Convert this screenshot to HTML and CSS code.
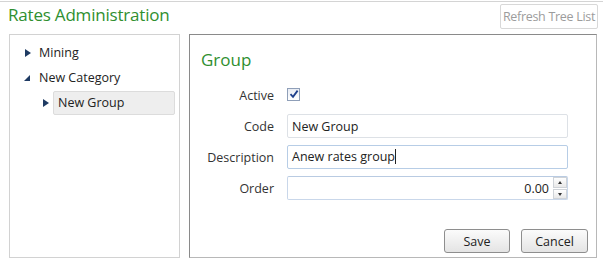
FILE: index.html
```html
<!DOCTYPE html>
<html lang="en">
<head>
    <meta charset="UTF-8">
    <title>Rates Administration</title>
    <link rel="stylesheet" href="styles.css">
</head>
<body>
    <div class="header">
        <h2>Rates Administration</h2>
        <button class="refreshButton" disabled>Refresh Tree List</button>
    </div>

    <div class="admin-container">
        <div class="tree">
            <div class="node">
                <span class="arrow collapsed"></span>
                <span class="label">Mining</span>
            </div>
            <div class="node">
                <span class="arrow expanded"></span>
                <span class="label">New Category</span>
            </div>
            <div class="node child">
                <span class="arrow collapsed"></span>
                <span class="label selected">New Group</span>
            </div>
        </div>

        <div class="editor">
            <h3>Group</h3>
            <form class="group-form">
                <label for="active">Active</label>
                <div class="check-cell">
                    <span class="checkbox" id="active">
                        <svg width="10" height="10" viewBox="0 0 10 10"><path d="M1.5 5.2 L4 7.8 L8.6 1.6" fill="none" stroke="#1d3f8c" stroke-width="1.8"/></svg>
                    </span>
                </div>

                <label for="code">Code</label>
                <input type="text" id="code" value="New Group">

                <label for="description">Description</label>
                <div class="input focused">Anew rates group<span class="caret"></span></div>

                <label for="order">Order</label>
                <div class="spinner">
                    <input type="text" id="order" value="0.00">
                    <div class="spin-buttons">
                        <span class="spin up"></span>
                        <span class="spin down"></span>
                    </div>
                </div>
            </form>

            <div class="actions">
                <button type="button">Save</button>
                <button type="button">Cancel</button>
            </div>
        </div>
    </div>
</body>
</html>
```

FILE: styles.css
```css
body {
    font-family: 'Open Sans', 'Noto Sans', sans-serif;
    font-size: 12px;
    color: #222;
    margin: 0;
    background-color: #fff;
    border-top: 1px solid #d4d4d4;
    margin-top: 1px;
}

.header {
    display: flex;
    justify-content: space-between;
    align-items: flex-start;
    height: 30px;
    padding: 0 5px 0 8px;
}

h2 {
    margin: 0;
    font-weight: normal;
    font-size: 17px;
    line-height: 25px;
    color: #2f8f2f;
    letter-spacing: -0.2px;
}

.refreshButton {
    font-family: inherit;
    font-size: 12.5px;
    color: #9c9c9c;
    background-color: #fff;
    border: 1px solid #d8d8d8;
    border-radius: 2px;
    height: 25px;
    width: 98px;
    padding: 0;
    margin-top: 2px;
    letter-spacing: -0.3px;
}

.admin-container {
    display: flex;
    padding: 2px 6px 0 9px;
    gap: 9px;
}

.tree {
    width: 171px;
    height: 224px;
    box-sizing: border-box;
    border: 1px solid #d2d2d2;
    padding-top: 5px;
}

.node {
    display: flex;
    align-items: center;
    height: 25px;
    padding-left: 14px;
}

.node.child {
    padding-left: 32px;
}

.arrow {
    width: 8px;
    height: 10px;
    margin-right: 3px;
    position: relative;
}

.arrow.collapsed::before {
    content: '';
    position: absolute;
    left: 1px;
    top: 1px;
    border-left: 6px solid #1f3b63;
    border-top: 4.5px solid transparent;
    border-bottom: 4.5px solid transparent;
}

.arrow.expanded::before {
    content: '';
    position: absolute;
    left: 0;
    top: 2px;
    border-right: 6px solid #1f3b63;
    border-top: 6px solid transparent;
}

.label {
    font-size: 12.5px;
    padding: 0 4px;
}

.label.selected {
    background-color: #eeeeee;
    border: 1px solid #dcdcdc;
    border-radius: 2px;
    width: 112px;
    height: 22px;
    line-height: 22px;
}

.editor {
    flex: 1;
    height: 224px;
    box-sizing: border-box;
    border: 1px solid #8a8a8a;
    border-right-color: #b8b8b8;
    border-bottom-color: #b8b8b8;
    display: flex;
    flex-direction: column;
}

h3 {
    margin: 13px 0 0 11px;
    font-weight: normal;
    font-size: 17px;
    color: #2f8f2f;
}

.group-form {
    display: grid;
    grid-template-columns: 84px 281px;
    column-gap: 13px;
    row-gap: 7px;
    margin-top: 12px;
    align-items: center;
}

.group-form label {
    text-align: right;
    font-size: 12.5px;
    color: #333;
}

.check-cell {
    height: 24px;
    display: flex;
    align-items: center;
}

.checkbox {
    width: 11px;
    height: 11px;
    border: 1px solid #8f9fb8;
    background: linear-gradient(#e8ecf4, #fff);
    display: flex;
    align-items: center;
    justify-content: center;
    margin-top: -2px;
}

.group-form input,
.input {
    font-family: inherit;
    font-size: 12.5px;
    color: #222;
    height: 24px;
    box-sizing: border-box;
    border: 1px solid #dde1e6;
    border-radius: 2px;
    padding: 0 4px;
    width: 100%;
    line-height: 22px;
}

.input.focused {
    border-color: #b7cde6;
}

.caret {
    display: inline-block;
    width: 1px;
    height: 15px;
    background-color: #222;
    vertical-align: -3px;
}

.spinner {
    display: flex;
    height: 24px;
}

.spinner input {
    text-align: right;
    padding-right: 18px;
    border-color: #c9d7ea;
    border-top-color: #b9cbe2;
}

.spin-buttons {
    display: flex;
    flex-direction: column;
    width: 14px;
    margin-left: -15px;
    margin-top: 1px;
    margin-bottom: 1px;
    gap: 1px;
    position: relative;
}

.spin {
    flex: 1;
    border: 1px solid #cfd3d8;
    background: linear-gradient(#fff, #e8e8e8);
    position: relative;
}

.spin.up::before,
.spin.down::before {
    content: '';
    position: absolute;
    left: 4px;
    top: 3px;
    border-left: 2.5px solid transparent;
    border-right: 2.5px solid transparent;
}

.spin.up::before {
    border-bottom: 3px solid #333;
}

.spin.down::before {
    border-top: 3px solid #333;
}

.actions {
    display: flex;
    justify-content: flex-end;
    gap: 11px;
    margin-top: auto;
    padding: 0 8px 4px 0;
}

.actions button {
    font-family: inherit;
    font-size: 12.5px;
    color: #222;
    width: 67px;
    height: 24px;
    border: 1px solid #8e8e8e;
    border-radius: 3px;
    background: linear-gradient(#fbfbfb, #e4e4e4);
    cursor: pointer;
}

.actions button:first-child {
    width: 66px;
}
```
